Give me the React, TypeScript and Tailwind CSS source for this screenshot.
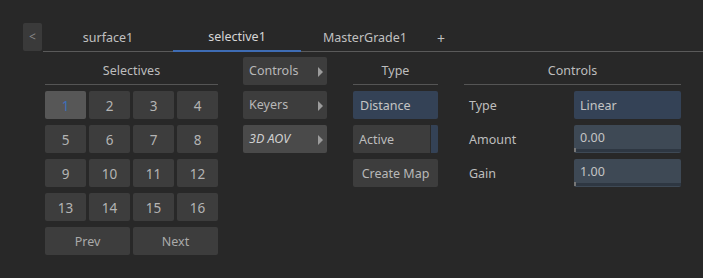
import React from "react";

const font = { fontFamily: '"Noto Sans", "Open Sans", sans-serif' };

function Arrow() {
  return (
    <span className="w-0 h-0 border-y-[5px] border-y-transparent border-l-[5px] border-l-[#9c9c9c]" />
  );
}

function Header({ title }: { title: string }) {
  return (
    <div className="h-[28px] flex items-center justify-center pt-[2px] border-b border-[#555] text-[12.5px] text-[#bdbdbd]">
      {title}
    </div>
  );
}

function Slider({ value }: { value: string }) {
  return (
    <div className="relative h-[28px] bg-[#3e4955] rounded-[2px] px-[6px] pt-[1px] text-[12.5px] text-[#c4c4c4] leading-[24px]">
      {value}
      <div className="absolute left-0 right-0 bottom-[1px] h-[3px] bg-[#2e3742]" />
      <div className="absolute left-0 bottom-[1px] h-[4px] w-[2px] bg-[#777]" />
    </div>
  );
}

export default function App() {
  const nums = Array.from({ length: 16 }, (_, i) => i + 1);

  return (
    <div className="w-[703px] h-[278px] bg-[#282828] text-[#b8b8b8] overflow-hidden" style={font}>
      {/* Tab bar */}
      <div className="pt-[23px] pl-[23px] flex">
        <div className="w-[19px] h-[28px] bg-[#3a3a3a] rounded-[2px] flex items-center justify-center text-[12px] text-[#888]">
          &lt;
        </div>
        <div className="flex-1 flex border-b border-[#5a5a5a] ml-[1px] h-[29px]">
          <div className="w-[130px] flex items-center justify-center pt-[2px] text-[12.5px] text-[#c0c0c0]">surface1</div>
          <div className="w-[128px] flex items-center justify-center pt-[2px] text-[12.5px] text-[#d6d6d6] border-b-2 border-[#3e6cb4] -mb-[1px]">
            selective1
          </div>
          <div className="w-[128px] flex items-center justify-center pt-[2px] text-[12.5px] text-[#c0c0c0]">MasterGrade1</div>
          <div className="w-[24px] flex items-center justify-center pt-[3px] text-[14px] text-[#c0c0c0]">+</div>
        </div>
      </div>

      {/* Content */}
      <div className="flex pl-[45px] pt-[5px] gap-[25px]">
        {/* Selectives */}
        <div className="w-[173px] flex flex-col gap-[6px]">
          <Header title="Selectives" />
          <div className="grid grid-cols-4 gap-x-[3px] gap-y-[6px]">
            {nums.map((n) => (
              <div
                key={n}
                className={
                  n === 1
                    ? "h-[28px] rounded-[2px] bg-[#575757] flex items-center justify-center pt-[2px] text-[13.5px] text-[#3d6fba]"
                    : "h-[28px] rounded-[2px] bg-[#3d3d3d] flex items-center justify-center pt-[2px] text-[13.5px] text-[#b4b4b4]"
                }
              >
                {n}
              </div>
            ))}
          </div>
          <div className="grid grid-cols-2 gap-x-[3px]">
            <div className="h-[28px] rounded-[2px] bg-[#3d3d3d] flex items-center justify-center pt-[2px] text-[12.5px] text-[#aaa]">Prev</div>
            <div className="h-[28px] rounded-[2px] bg-[#3d3d3d] flex items-center justify-center pt-[2px] text-[12.5px] text-[#aaa]">Next</div>
          </div>
        </div>

        {/* Menu */}
        <div className="w-[84px] flex flex-col gap-[6px]">
          <div className="h-[28px] rounded-[2px] bg-[#3d3d3d] flex items-center justify-between pl-[6px] pr-[4px] pt-[1px] text-[12.5px] text-[#b8b8b8]">
            Controls <Arrow />
          </div>
          <div className="h-[28px] rounded-[2px] bg-[#3d3d3d] flex items-center justify-between pl-[6px] pr-[4px] pt-[1px] text-[12.5px] text-[#b8b8b8]">
            Keyers <Arrow />
          </div>
          <div className="h-[28px] rounded-[2px] bg-[#4a4a4a] flex items-center justify-between pl-[6px] pr-[4px] pt-[1px] text-[12.5px] italic text-[#d0d0d0]">
            3D AOV <Arrow />
          </div>
        </div>

        {/* Type */}
        <div className="w-[85px] flex flex-col gap-[6px] ml-[1px]">
          <Header title="Type" />
          <div className="h-[28px] rounded-[2px] bg-[#344256] flex items-center pl-[7px] pt-[2px] text-[12.5px] text-[#c4c4c4]">Distance</div>
          <div className="h-[28px] rounded-[2px] bg-[#3d3d3d] flex overflow-hidden text-[12.5px] text-[#bcbcbc]">
            <div className="flex-1 flex items-center pl-[6px] pt-[2px]">Active</div>
            <div className="w-[8px] bg-[#344256] border-l border-[#2a2a2a]" />
          </div>
          <div className="h-[28px] rounded-[2px] bg-[#3d3d3d] flex items-center justify-center pt-[2px] text-[12.5px] text-[#b8b8b8]">Create Map</div>
        </div>

        {/* Controls */}
        <div className="w-[217px] flex flex-col gap-[6px] ml-[1px]">
          <Header title="Controls" />
          <div className="flex items-center h-[28px]">
            <div className="w-[110px] pl-[5px] pt-[3px] text-[12.5px] text-[#bebebe]">Type</div>
            <div className="flex-1 h-[28px] rounded-[2px] bg-[#344256] flex items-center pl-[6px] pt-[2px] text-[12.5px] text-[#c4c4c4]">Linear</div>
          </div>
          <div className="flex items-center h-[28px]">
            <div className="w-[110px] pl-[5px] pt-[3px] text-[12.5px] text-[#bebebe]">Amount</div>
            <div className="flex-1">
              <Slider value="0.00" />
            </div>
          </div>
          <div className="flex items-center h-[28px]">
            <div className="w-[110px] pl-[5px] pt-[3px] text-[12.5px] text-[#bebebe]">Gain</div>
            <div className="flex-1">
              <Slider value="1.00" />
            </div>
          </div>
        </div>
      </div>
    </div>
  );
}
